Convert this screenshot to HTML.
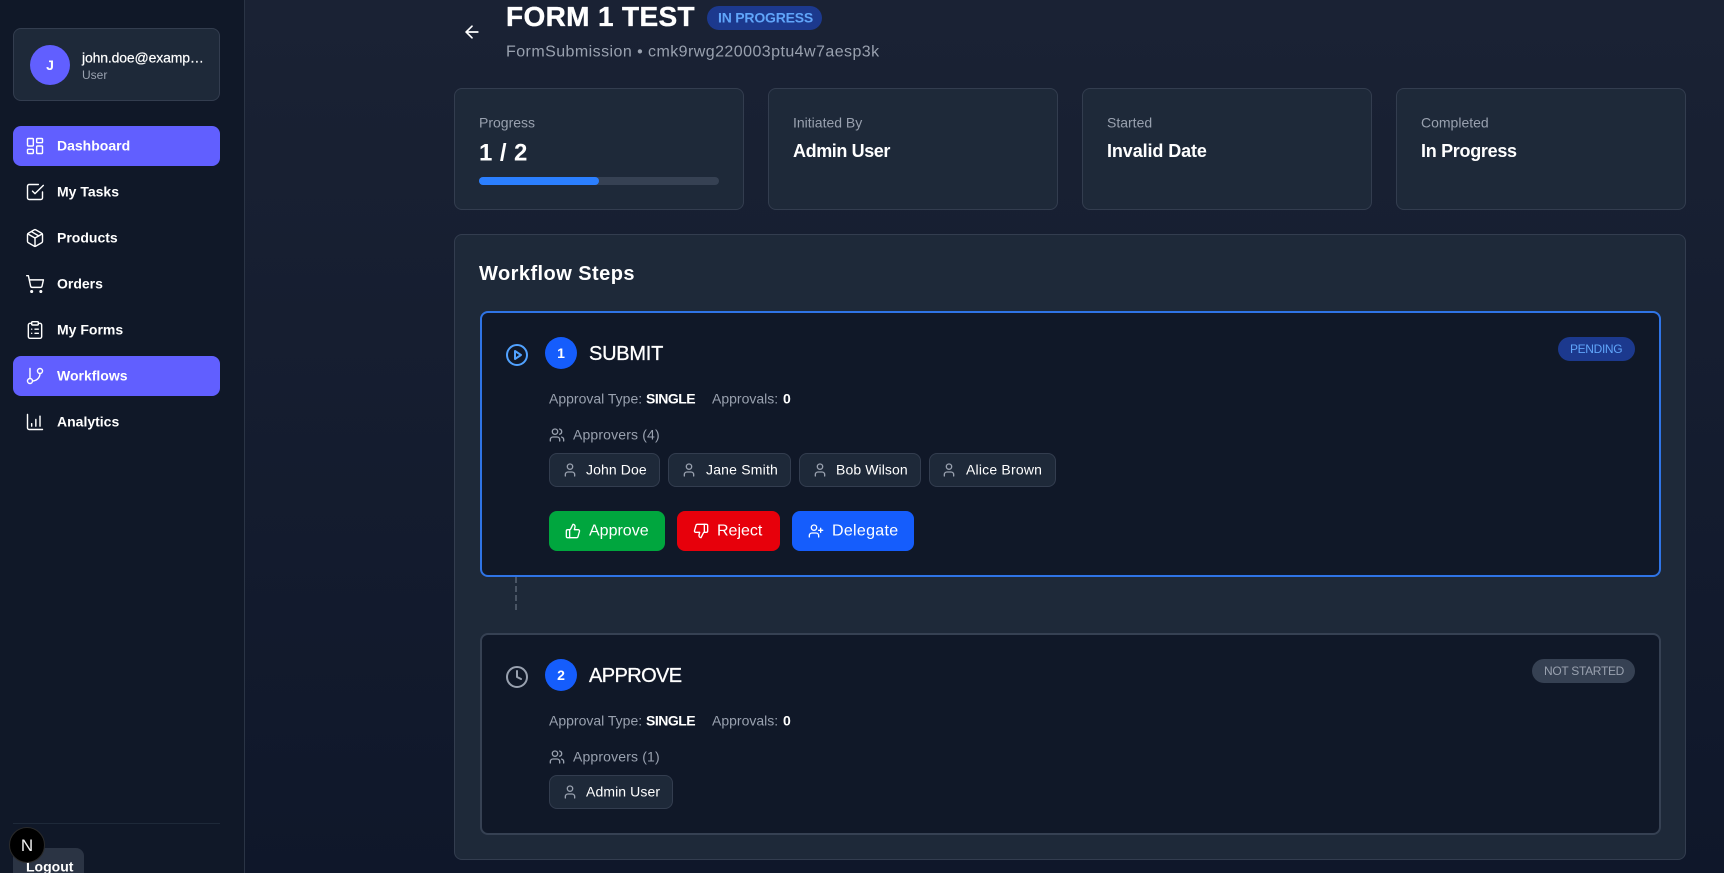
<!DOCTYPE html>
<html lang="en"><head><meta charset="utf-8"><title>FORM 1 TEST</title>
<style>
*{box-sizing:border-box;margin:0;padding:0}
html,body{width:1724px;height:873px;overflow:hidden;background:#101828}
body{font-family:"Liberation Sans",sans-serif;color:#fff;position:relative}
.a,.t,svg.i{position:absolute}
.t{white-space:nowrap;transform:translateY(-50%);line-height:1.2}
.main{left:245px;top:0;width:1479px;height:873px;background:linear-gradient(180deg,#1a2234 0%,#0f172a 100%)}
.side{left:0;top:0;width:245px;height:873px;background:#101828;border-right:1px solid #2a3445}
svg.i{fill:none;stroke:currentColor;stroke-width:2;stroke-linecap:round;stroke-linejoin:round}
svg.s{stroke-width:1.7}
.nav{left:13px;width:207px;height:40px;background:#615fff;border-radius:8px}
.n{left:57px;font-size:14px;font-weight:bold;color:#fff}
.card{top:88px;width:290px;height:122px;background:#1e2939;border:1px solid #333d4f;border-radius:8px}
.l{font-size:14px;color:#99a1af}
.v{font-size:18px;font-weight:bold;letter-spacing:-.4px}
.step{left:480px;width:1181px;background:#101828;border:2px solid #364153;border-radius:8px}
.num{left:545px;width:32px;height:32px;border-radius:50%;background:#155dfc;font-size:14px;font-weight:bold;line-height:32px;text-align:center}
.h{left:589px;font-size:20px;-webkit-text-stroke:.3px #fff;letter-spacing:-.25px}
.m{font-size:14px;color:#99a1af}
.b{font-size:14px;font-weight:bold;color:#fff}
.chip{height:34px;background:#1e2939;border:1px solid #333d4f;border-radius:8px}
.c{font-size:14px;color:#fff;letter-spacing:.1px}
.btn{top:511px;height:40px;border-radius:8px}
.bt{font-size:16px;color:#fff;top:531px}
.pill{border-radius:12px;height:24px}
</style></head><body>
<div class="a main"></div>
<div class="a side"></div>

<!-- sidebar -->
<div class="a" style="left:13px;top:28px;width:207px;height:73px;background:#1e2939;border:1px solid #333d4f;border-radius:8px"></div>
<div class="a" style="left:30px;top:45px;width:40px;height:40px;border-radius:50%;background:#615fff;font-size:14px;font-weight:bold;line-height:40px;text-align:center">J</div>
<div class="t" style="left:82px;top:58px;font-size:14px;-webkit-text-stroke:.2px #fff;letter-spacing:-.15px">john.doe@examp…</div>
<div class="t" style="left:82px;top:75px;font-size:12px;color:#99a1af">User</div>

<div class="a nav" style="top:126px"></div>
<div class="a nav" style="top:356px"></div>

<svg class="i s" style="left:25px;top:136px" width="20" height="20" viewBox="0 0 24 24"><rect x="3" y="3" width="7" height="9" rx="1"/><rect x="14" y="3" width="7" height="5" rx="1"/><rect x="14" y="12" width="7" height="9" rx="1"/><rect x="3" y="16" width="7" height="5" rx="1"/></svg>
<div class="t n" style="top:146px">Dashboard</div>
<svg class="i s" style="left:25px;top:182px" width="20" height="20" viewBox="0 0 24 24"><path d="M9 11l3 3L22 4"/><path d="M21 12v7a2 2 0 0 1-2 2H5a2 2 0 0 1-2-2V5a2 2 0 0 1 2-2h11"/></svg>
<div class="t n" style="top:192px">My Tasks</div>
<svg class="i s" style="left:25px;top:228px" width="20" height="20" viewBox="0 0 24 24"><path d="M11 21.73a2 2 0 0 0 2 0l7-4A2 2 0 0 0 21 16V8a2 2 0 0 0-1-1.73l-7-4a2 2 0 0 0-2 0l-7 4A2 2 0 0 0 3 8v8a2 2 0 0 0 1 1.73z"/><path d="M12 22V12"/><path d="m3.3 7 8.7 5 8.7-5"/><path d="m7.5 4.27 9 5.15"/></svg>
<div class="t n" style="top:238px">Products</div>
<svg class="i s" style="left:25px;top:274px" width="20" height="20" viewBox="0 0 24 24"><circle cx="8" cy="21" r="1"/><circle cx="19" cy="21" r="1"/><path d="M2.05 2.05h2l2.66 12.42a2 2 0 0 0 2 1.58h9.78a2 2 0 0 0 1.95-1.57l1.65-7.43H5.12"/></svg>
<div class="t n" style="top:284px">Orders</div>
<svg class="i s" style="left:25px;top:320px" width="20" height="20" viewBox="0 0 24 24"><rect x="8" y="2" width="8" height="4" rx="1"/><path d="M16 4h2a2 2 0 0 1 2 2v14a2 2 0 0 1-2 2H6a2 2 0 0 1-2-2V6a2 2 0 0 1 2-2h2"/><path d="M12 11h4"/><path d="M12 16h4"/><path d="M8 11h.01"/><path d="M8 16h.01"/></svg>
<div class="t n" style="top:330px">My Forms</div>
<svg class="i s" style="left:25px;top:366px" width="20" height="20" viewBox="0 0 24 24"><path d="M6 3v12"/><circle cx="18" cy="6" r="3"/><circle cx="6" cy="18" r="3"/><path d="M18 9a9 9 0 0 1-9 9"/></svg>
<div class="t n" style="top:376px">Workflows</div>
<svg class="i s" style="left:25px;top:412px" width="20" height="20" viewBox="0 0 24 24"><path d="M3 3v16a2 2 0 0 0 2 2h16"/><path d="M18 17V5"/><path d="M13 17V9"/><path d="M8 17v-3"/></svg>
<div class="t n" style="top:422px">Analytics</div>

<div class="a" style="left:13px;top:823px;width:207px;height:1px;background:#1e2939"></div>
<div class="a" style="left:13px;top:848px;width:71px;height:40px;background:#2b3444;border-radius:8px"></div>
<div class="t" style="left:26px;top:867px;font-size:14px;font-weight:bold">Logout</div>
<div class="a" style="left:9px;top:827px;width:36px;height:36px;border-radius:50%;background:#000;border:1px solid #2a2a2a;font-size:17px;line-height:36px;text-align:center;color:#eee">N</div>

<!-- header -->
<svg class="i" style="left:462px;top:22px;color:#fff" width="20" height="20" viewBox="0 0 24 24"><path d="m12 19-7-7 7-7"/><path d="M19 12H5"/></svg>
<div class="t" style="left:506px;top:17px;font-size:28px;font-weight:bold;letter-spacing:.35px;-webkit-text-stroke:.35px #fff">FORM 1 TEST</div>
<div class="a pill" style="left:707px;top:6px;width:115px;background:#1c398e"></div>
<div class="t" style="left:718px;top:18px;font-size:14px;font-weight:bold;color:#60a5fa;letter-spacing:-.2px">IN PROGRESS</div>
<div class="t" style="left:506px;top:52px;font-size:16px;color:#99a1af;letter-spacing:.44px">FormSubmission • cmk9rwg220003ptu4w7aesp3k</div>

<!-- stat cards -->
<div class="a card" style="left:454px"></div>
<div class="a card" style="left:768px"></div>
<div class="a card" style="left:1082px"></div>
<div class="a card" style="left:1396px"></div>
<div class="t l" style="left:479px;top:123px">Progress</div>
<div class="t" style="left:479px;top:154px;font-size:24px;font-weight:bold;letter-spacing:.4px">1 / 2</div>
<div class="a" style="left:479px;top:177px;width:240px;height:8px;border-radius:4px;background:#364153"></div>
<div class="a" style="left:479px;top:177px;width:120px;height:8px;border-radius:4px;background:#2b7fff"></div>
<div class="t l" style="left:793px;top:123px">Initiated By</div>
<div class="t v" style="left:793px;top:152px">Admin User</div>
<div class="t l" style="left:1107px;top:123px">Started</div>
<div class="t v" style="left:1107px;top:152px;letter-spacing:-.1px">Invalid Date</div>
<div class="t l" style="left:1421px;top:123px">Completed</div>
<div class="t v" style="left:1421px;top:152px;letter-spacing:-.3px">In Progress</div>

<!-- panel -->
<div class="a" style="left:454px;top:234px;width:1232px;height:626px;background:#1e2939;border:1px solid #333d4f;border-radius:8px"></div>
<div class="t" style="left:479px;top:274px;font-size:20px;font-weight:bold;letter-spacing:.45px">Workflow Steps</div>

<!-- step 1 -->
<div class="a step" style="top:311px;height:266px;border-color:#2f74e6"></div>
<svg class="i" style="left:505px;top:343px;color:#51a2ff" width="24" height="24" viewBox="0 0 24 24"><circle cx="12" cy="12" r="10"/><polygon points="10 8 16 12 10 16 10 8"/></svg>
<div class="a num" style="top:337px">1</div>
<div class="t h" style="top:354px">SUBMIT</div>
<div class="a pill" style="left:1558px;top:337px;width:77px;background:#1c398e"></div>
<div class="t" style="left:1570px;top:349px;font-size:12px;color:#60a5fa;letter-spacing:-.35px">PENDING</div>

<div class="t m" style="left:549px;top:399px">Approval Type:</div>
<div class="t b" style="left:646px;top:399px;letter-spacing:-.5px">SINGLE</div>
<div class="t m" style="left:712px;top:399px">Approvals:</div>
<div class="t b" style="left:783px;top:399px">0</div>

<svg class="i" style="left:549px;top:427px;color:#99a1af" width="16" height="16" viewBox="0 0 24 24"><path d="M16 21v-2a4 4 0 0 0-4-4H6a4 4 0 0 0-4 4v2"/><circle cx="9" cy="7" r="4"/><path d="M22 21v-2a4 4 0 0 0-3-3.87"/><path d="M16 3.13a4 4 0 0 1 0 7.75"/></svg>
<div class="t m" style="left:573px;top:435px;letter-spacing:.15px">Approvers (4)</div>

<div class="a chip" style="left:549px;top:453px;width:111px"></div>
<svg class="i" style="left:562px;top:462px;color:#99a1af" width="16" height="16" viewBox="0 0 24 24"><path d="M19 21v-2a4 4 0 0 0-4-4H9a4 4 0 0 0-4 4v2"/><circle cx="12" cy="7" r="4"/></svg>
<div class="t c" style="left:586px;top:470px">John Doe</div>
<div class="a chip" style="left:668px;top:453px;width:123px"></div>
<svg class="i" style="left:681px;top:462px;color:#99a1af" width="16" height="16" viewBox="0 0 24 24"><path d="M19 21v-2a4 4 0 0 0-4-4H9a4 4 0 0 0-4 4v2"/><circle cx="12" cy="7" r="4"/></svg>
<div class="t c" style="left:706px;top:470px;letter-spacing:.2px">Jane Smith</div>
<div class="a chip" style="left:799px;top:453px;width:122px"></div>
<svg class="i" style="left:812px;top:462px;color:#99a1af" width="16" height="16" viewBox="0 0 24 24"><path d="M19 21v-2a4 4 0 0 0-4-4H9a4 4 0 0 0-4 4v2"/><circle cx="12" cy="7" r="4"/></svg>
<div class="t c" style="left:836px;top:470px">Bob Wilson</div>
<div class="a chip" style="left:929px;top:453px;width:127px"></div>
<svg class="i" style="left:941px;top:462px;color:#99a1af" width="16" height="16" viewBox="0 0 24 24"><path d="M19 21v-2a4 4 0 0 0-4-4H9a4 4 0 0 0-4 4v2"/><circle cx="12" cy="7" r="4"/></svg>
<div class="t c" style="left:966px;top:470px;letter-spacing:.2px">Alice Brown</div>

<div class="a btn" style="left:549px;width:116px;background:#00a63e"></div>
<svg class="i" style="left:565px;top:523px;color:#fff" width="16" height="16" viewBox="0 0 24 24"><path d="M7 10v12"/><path d="M15 5.88 14 10h5.83a2 2 0 0 1 1.92 2.56l-2.33 8A2 2 0 0 1 17.5 22H4a2 2 0 0 1-2-2v-8a2 2 0 0 1 2-2h2.76a2 2 0 0 0 1.79-1.11L12 2a3.13 3.13 0 0 1 3 3.88Z"/></svg>
<div class="t bt" style="left:589px">Approve</div>
<div class="a btn" style="left:677px;width:103px;background:#e7000b"></div>
<svg class="i" style="left:693px;top:523px;color:#fff" width="16" height="16" viewBox="0 0 24 24"><path d="M17 14V2"/><path d="M9 18.12 10 14H4.17a2 2 0 0 1-1.92-2.56l2.33-8A2 2 0 0 1 6.5 2H20a2 2 0 0 1 2 2v8a2 2 0 0 1-2 2h-2.76a2 2 0 0 0-1.79 1.11L12 22a3.13 3.13 0 0 1-3-3.88Z"/></svg>
<div class="t bt" style="left:717px">Reject</div>
<div class="a btn" style="left:792px;width:122px;background:#155dfc"></div>
<svg class="i" style="left:808px;top:523px;color:#fff" width="16" height="16" viewBox="0 0 24 24"><path d="M16 21v-2a4 4 0 0 0-4-4H6a4 4 0 0 0-4 4v2"/><circle cx="9" cy="7" r="4"/><path d="M19 8v6"/><path d="M22 11h-6"/></svg>
<div class="t bt" style="left:832px;letter-spacing:.3px">Delegate</div>

<!-- connector -->
<div class="a" style="left:515px;top:577px;width:0;height:33px;border-left:2px dashed #4a5565"></div>

<!-- step 2 -->
<div class="a step" style="top:633px;height:202px"></div>
<svg class="i" style="left:505px;top:665px;color:#99a1af" width="24" height="24" viewBox="0 0 24 24"><circle cx="12" cy="12" r="10"/><polyline points="12 6 12 12 16 14"/></svg>
<div class="a num" style="top:659px">2</div>
<div class="t h" style="top:676px;letter-spacing:-.6px">APPROVE</div>
<div class="a pill" style="left:1532px;top:659px;width:103px;background:#364153"></div>
<div class="t" style="left:1544px;top:671px;font-size:12px;color:#99a1af;letter-spacing:-.3px">NOT STARTED</div>

<div class="t m" style="left:549px;top:721px">Approval Type:</div>
<div class="t b" style="left:646px;top:721px;letter-spacing:-.5px">SINGLE</div>
<div class="t m" style="left:712px;top:721px">Approvals:</div>
<div class="t b" style="left:783px;top:721px">0</div>

<svg class="i" style="left:549px;top:749px;color:#99a1af" width="16" height="16" viewBox="0 0 24 24"><path d="M16 21v-2a4 4 0 0 0-4-4H6a4 4 0 0 0-4 4v2"/><circle cx="9" cy="7" r="4"/><path d="M22 21v-2a4 4 0 0 0-3-3.87"/><path d="M16 3.13a4 4 0 0 1 0 7.75"/></svg>
<div class="t m" style="left:573px;top:757px;letter-spacing:.15px">Approvers (1)</div>

<div class="a chip" style="left:549px;top:775px;width:124px"></div>
<svg class="i" style="left:562px;top:784px;color:#99a1af" width="16" height="16" viewBox="0 0 24 24"><path d="M19 21v-2a4 4 0 0 0-4-4H9a4 4 0 0 0-4 4v2"/><circle cx="12" cy="7" r="4"/></svg>
<div class="t c" style="left:586px;top:792px">Admin User</div>
</body></html>
